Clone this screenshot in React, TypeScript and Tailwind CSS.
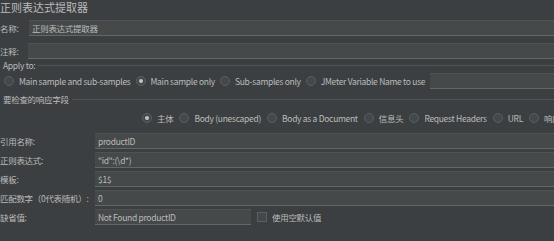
const FONT = 'font-["Noto_Sans_CJK_SC","Liberation_Sans",sans-serif]';

const APPLY_TO = [
  { label: 'Main sample and sub-samples', checked: false },
  { label: 'Main sample only', checked: true },
  { label: 'Sub-samples only', checked: false },
  { label: 'JMeter Variable Name to use', checked: false },
];

const FIELDS_TO_CHECK = [
  { label: '主体', checked: true },
  { label: 'Body (unescaped)', checked: false },
  { label: 'Body as a Document', checked: false },
  { label: '信息头', checked: false },
  { label: 'Request Headers', checked: false },
  { label: 'URL', checked: false },
  { label: '响应代码', checked: false },
];

const ROWS = [
  { label: '引用名称:', value: 'productID' },
  { label: '正则表达式:', value: '"id":(\\d*)' },
  { label: '模板:', value: '$1$' },
  { label: '匹配数字（0代表随机）:', value: '0' },
];

function Radio({ checked }: { checked: boolean }) {
  return (
    <span className="w-[10px] h-[10px] shrink-0 rounded-full border border-[#5b5f61] bg-[#43494a] flex items-center justify-center">
      {checked && <span className="w-[4px] h-[4px] rounded-full bg-[#c4c4c4]" />}
    </span>
  );
}

function Input({ value, className = '' }: { value?: string; className?: string }) {
  return (
    <div
      className={`h-[16px] bg-[#45494a] border-t border-t-[#4e5254] border-b border-b-[#63676a] px-[3px] flex items-center text-[#bbbbbb] whitespace-nowrap ${className}`}
    >
      {value}
    </div>
  );
}

function GroupTitle({ title }: { title: string }) {
  return (
    <div className="h-[10px] flex items-center pl-[3px] leading-[10px]">
      <span className="whitespace-nowrap">{title}</span>
      <div className="flex-1 ml-[3px] h-px bg-[#515456]" />
    </div>
  );
}

export default function App() {
  return (
    <div className={`w-[554px] h-[241px] overflow-hidden bg-[#3c3f41] text-[#bbbbbb] text-[8.5px] tracking-[-0.3px] ${FONT}`}>
      {/* Title */}
      <div className="h-[16px] text-[11px] leading-[15px] tracking-normal">正则表达式提取器</div>

      {/* Name / comments */}
      <div className="mt-[4px] flex items-center">
        <span className="w-[29px] shrink-0">名称:</span>
        <Input value="正则表达式提取器" className="flex-1 -mr-[10px]" />
      </div>
      <div className="mt-[7px] flex items-center">
        <span className="w-[28px] shrink-0">注释:</span>
        <Input className="flex-1 -mr-[10px]" />
      </div>

      {/* Apply to */}
      <div className="mt-px">
        <GroupTitle title="Apply to:" />
      </div>
      <div className="mt-[3px] h-[16px] flex items-center pl-[4px] whitespace-nowrap">
        {APPLY_TO.map(r => (
          <div key={r.label} className="flex items-center gap-[5px] mr-[5px] shrink-0">
            <Radio checked={r.checked} />
            <span>{r.label}</span>
          </div>
        ))}
        <Input className="flex-1 min-w-[120px] -mr-[20px]" />
      </div>

      {/* Fields to check */}
      <div className="mt-[5px]">
        <GroupTitle title="要检查的响应字段" />
      </div>
      <div className="mt-[8px] h-[12px] flex items-center pl-[142px] whitespace-nowrap">
        {FIELDS_TO_CHECK.map(r => (
          <div key={r.label} className="flex items-center gap-[5px] mr-[6px] shrink-0">
            <Radio checked={r.checked} />
            <span>{r.label}</span>
          </div>
        ))}
      </div>

      {/* Extractor fields */}
      <div className="mt-[9px] flex flex-col gap-[3px]">
        {ROWS.map(r => (
          <div key={r.label} className="flex items-center">
            <span className="w-[95px] shrink-0 whitespace-nowrap">{r.label}</span>
            <Input value={r.value} className="flex-1 -mr-[10px]" />
          </div>
        ))}
        <div className="flex items-center">
          <span className="w-[95px] shrink-0">缺省值:</span>
          <Input value="Not Found productID" className="w-[156px] shrink-0" />
          <span className="ml-[6px] w-[10px] h-[10px] border border-[#5b5f61] bg-[#43494a] shrink-0" />
          <span className="ml-[5px] whitespace-nowrap">使用空默认值</span>
        </div>
      </div>
    </div>
  );
}
